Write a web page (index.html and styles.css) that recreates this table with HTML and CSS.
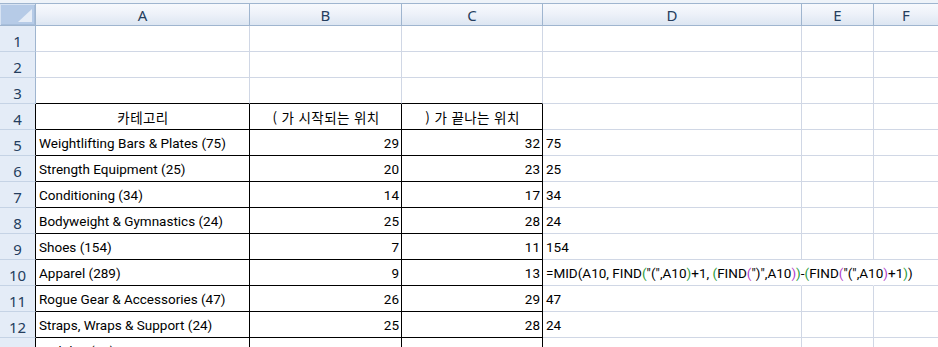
FILE: index.html
```html
<!DOCTYPE html>
<html lang="ko">
<head>
<meta charset="utf-8">
<link rel="stylesheet" href="styles.css">
</head>
<body>
<div class="topbar"></div>
<div class="sheet">
  <div class="corner"><span class="tri"></span></div>
  <div class="colh">A</div><div class="colh">B</div><div class="colh">C</div><div class="colh">D</div><div class="colh">E</div><div class="colh last">F</div>

  <div class="rowh">1</div><div class="c"></div><div class="c"></div><div class="c"></div><div class="c"></div><div class="c"></div><div class="c last"></div>
  <div class="rowh">2</div><div class="c"></div><div class="c"></div><div class="c"></div><div class="c"></div><div class="c"></div><div class="c last"></div>
  <div class="rowh">3</div><div class="c k-b"></div><div class="c k-b"></div><div class="c k-b"></div><div class="c"></div><div class="c"></div><div class="c last"></div>

  <div class="rowh k-l">4</div><div class="c k center kr">카테고리</div><div class="c k center kr">( 가 시작되는 위치</div><div class="c k center kr">) 가 끝나는 위치</div><div class="c"></div><div class="c"></div><div class="c last"></div>

  <div class="rowh k-l">5</div><div class="c k">Weightlifting Bars &amp; Plates (75)</div><div class="c k num">29</div><div class="c k num">32</div><div class="c">75</div><div class="c"></div><div class="c last"></div>
  <div class="rowh k-l">6</div><div class="c k">Strength Equipment (25)</div><div class="c k num">20</div><div class="c k num">23</div><div class="c">25</div><div class="c"></div><div class="c last"></div>
  <div class="rowh k-l">7</div><div class="c k">Conditioning (34)</div><div class="c k num">14</div><div class="c k num">17</div><div class="c">34</div><div class="c"></div><div class="c last"></div>
  <div class="rowh k-l">8</div><div class="c k">Bodyweight &amp; Gymnastics (24)</div><div class="c k num">25</div><div class="c k num">28</div><div class="c">24</div><div class="c"></div><div class="c last"></div>
  <div class="rowh k-l">9</div><div class="c k">Shoes (154)</div><div class="c k num">7</div><div class="c k num">11</div><div class="c">154</div><div class="c"></div><div class="c last"></div>
  <div class="rowh k-l">10</div><div class="c k">Apparel (289)</div><div class="c k num">9</div><div class="c k num">13</div><div class="c over"><span class="formula">=MID<span class="p0">(</span>A10, FIND<span class="p1">(</span>"(",A10<span class="p1">)</span>+1, <span class="p1">(</span>FIND<span class="p2">(</span>")",A10<span class="p2">)</span><span class="p1">)</span>-<span class="p1">(</span>FIND<span class="p2">(</span>"(",A10<span class="p2">)</span>+1<span class="p1">)</span><span class="p0">)</span></span></div><div class="c open"></div><div class="c open last"></div>
  <div class="rowh k-l">11</div><div class="c k">Rogue Gear &amp; Accessories (47)</div><div class="c k num">26</div><div class="c k num">29</div><div class="c">47</div><div class="c"></div><div class="c last"></div>
  <div class="rowh k-l">12</div><div class="c k">Straps, Wraps &amp; Support (24)</div><div class="c k num">25</div><div class="c k num">28</div><div class="c">24</div><div class="c"></div><div class="c last"></div>
  <div class="rowh k-l">13</div><div class="c k">Mobility (33)</div><div class="c k num">10</div><div class="c k num">13</div><div class="c">33</div><div class="c"></div><div class="c last"></div>
</div>
</body>
</html>
```
FILE: styles.css
```css
html, body {
  margin: 0;
  padding: 0;
  background: #ffffff;
  overflow: hidden;
}
body {
  width: 938px;
  height: 347px;
  font-family: Roboto, "Noto Sans CJK KR", sans-serif;
  font-size: 13.5px;
  color: #000;
}
.topbar {
  height: 3px;
  background: #eef3f9;
  border-bottom: 1px solid #9fb5cf;
}
.sheet {
  display: grid;
  grid-template-columns: 36px 214px 152px 141px 259px 72px 64px;
  grid-template-rows: 22px repeat(13, 26px);
}
.corner {
  position: relative;
  background: #b6cbe7;
  border-right: 1px solid #9fb5cf;
  border-bottom: 1px solid #9fb5cf;
  box-shadow: inset 1px 1px 0 #d7e3f3, inset -1px -1px 0 #a7bedb;
}
.tri {
  position: absolute;
  right: 3px;
  bottom: 3px;
  width: 0;
  height: 0;
  border-left: 14px solid transparent;
  border-bottom: 13px solid #e6edf7;
}
.colh {
  background: linear-gradient(#f7f9fd 0%, #eef2f9 45%, #dde6f2 100%);
  border-right: 1px solid #9fb5cf;
  border-bottom: 1px solid #9fb5cf;
  color: #253e5e;
  font-family: "Noto Sans", sans-serif;
  font-size: 15px;
  display: flex;
  align-items: center;
  justify-content: center;
  line-height: 1;
  padding-top: 1px;
}
.colh.last { border-right: none; }
.rowh {
  background: #e4ecf7;
  border-right: 1px solid #9fb5cf;
  border-bottom: 1px solid #c5d3e5;
  color: #253e5e;
  font-family: "Noto Sans", sans-serif;
  font-size: 15px;
  display: flex;
  align-items: flex-end;
  justify-content: center;
  padding-bottom: 2px;
  line-height: 1;
  box-sizing: border-box;
}
.rowh.k-l { border-right-color: #000; }
.c {
  box-sizing: border-box;
  border-right: 1px solid #d0d7e5;
  border-bottom: 1px solid #d0d7e5;
  display: flex;
  align-items: flex-end;
  padding: 0 2px 3px 3px;
  line-height: 18px;
  white-space: nowrap;
}
.c.last { border-right: none; }
.c.k-b { border-bottom-color: #000; }
.c.k { border-right-color: #000; border-bottom-color: #000; }
.c.center { justify-content: center; }
.c.kr { font-family: "Noto Sans CJK KR", sans-serif; font-size: 13.5px; letter-spacing: 0.4px; }
.c.num { justify-content: flex-end; }
.c.over {
  overflow: visible;
  border-right-color: transparent;
  position: relative;
  z-index: 1;
}
.formula { white-space: pre; }
.c.open {
  background: transparent;
  border-right-color: transparent;
}
.p0 { color: #000; }
.p1 { color: #1f9a3a; }
.p2 { color: #b03cc8; }
```
